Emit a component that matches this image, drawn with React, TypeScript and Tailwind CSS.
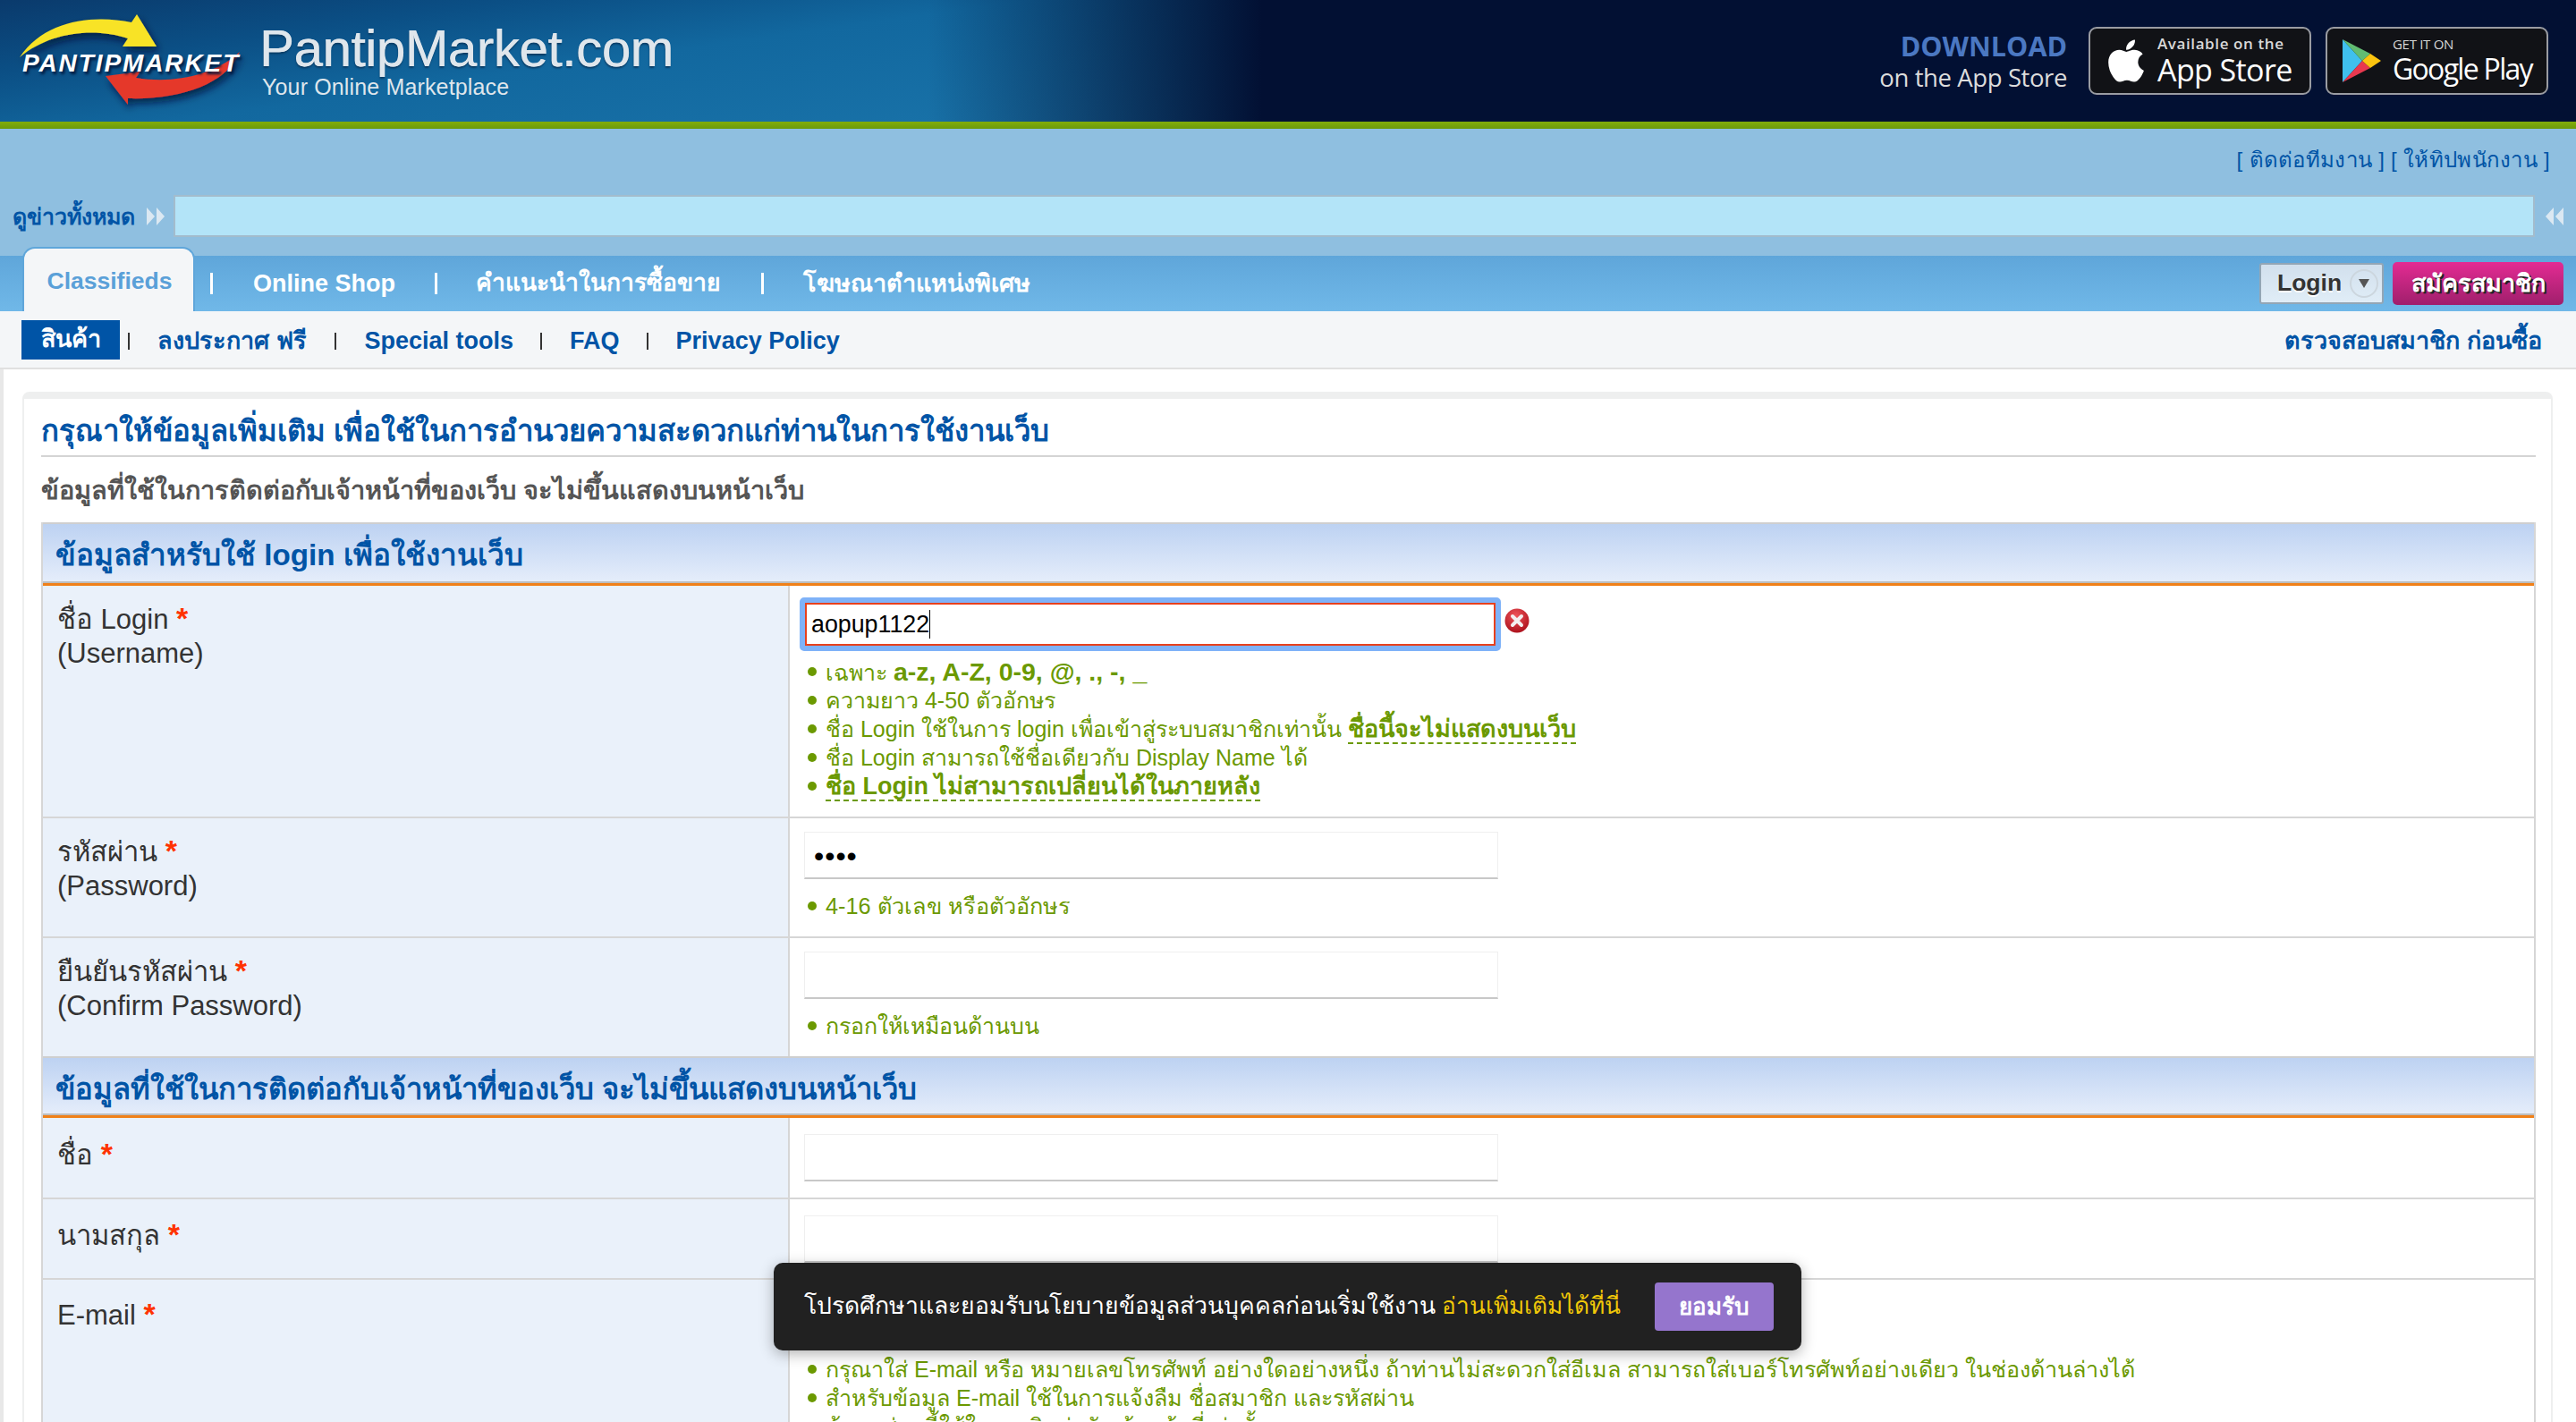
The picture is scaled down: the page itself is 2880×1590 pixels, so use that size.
import React from "react";
import { FaApple } from "react-icons/fa";

function Sep({ className = "" }: { className?: string }) {
  return <span className={`w-[3px] h-[24px] bg-white shrink-0 ${className}`} />;
}

function SubSep({ className = "" }: { className?: string }) {
  return <span className={`w-[2px] h-[19px] bg-[#333] shrink-0 ${className}`} />;
}

function Star() {
  return <span className="text-[#ff3300] font-bold text-[34px] leading-none">*</span>;
}

function Hint({ children }: { children: React.ReactNode }) {
  return (
    <div className="flex items-center h-[32px] leading-[32px] whitespace-nowrap">
      <span className="w-[10px] h-[10px] rounded-full bg-[#6b9900] shrink-0 mr-[10px]" />
      <span>{children}</span>
    </div>
  );
}

function Dash({ children }: { children: React.ReactNode }) {
  return <b className="font-bold text-[27px] border-b-2 border-dashed border-[#6b9900] leading-[30px] inline-block">{children}</b>;
}

function Field({ value }: { value?: string }) {
  return (
    <div className="w-[776px] h-[53px] bg-white border border-[#efefef] border-b-2 border-b-[#c8c8c8] flex items-center pl-[10px] text-black">
      {value && <span className="text-[32px] tracking-[1px] leading-none pt-[2px]">{value}</span>}
    </div>
  );
}

function Row({ label, h, labelPad = "pt-[19px]", children }: { label: React.ReactNode; h: string; labelPad?: string; children: React.ReactNode }) {
  return (
    <div className={`flex ${h} border-b-2 border-[#d6d6d6]`}>
      <div className={`w-[835px] shrink-0 bg-[#eaf1fa] border-r-2 border-[#d6d6d6] pl-[16px] ${labelPad} text-[31px] leading-[38px] text-[#333]`}>{label}</div>
      <div className="flex-1 pl-[16px] bg-white">{children}</div>
    </div>
  );
}

function SectionHead({ children, h, textClass }: { children: React.ReactNode; h: string; textClass: string }) {
  return (
    <div className={`${h} bg-gradient-to-b from-[#bdd2f2] to-[#e8effb] border-t-2 border-[#cfcfcf] flex flex-col`}>
      <div className={`flex-1 flex items-center pl-[14px] font-bold text-[#0054a6] ${textClass}`}>{children}</div>
      <div className="h-[5px] bg-[#f08018] border-t-2 border-[#bdbdbd] shrink-0" />
    </div>
  );
}

function Logo() {
  return (
    <div className="relative w-[280px] h-[136px] shrink-0">
      <svg viewBox="0 0 280 136" className="absolute inset-0 w-full h-full">
        <defs>
          <filter id="s" x="-10%" y="-10%" width="125%" height="130%">
            <feDropShadow dx="3" dy="5" stdDeviation="4" floodColor="#001030" floodOpacity="0.75" />
          </filter>
        </defs>
        <g filter="url(#s)">
          <path d="M22 64 C50 22 105 16 147 25 L153 16 L175 52 L137 52 L143 43 C105 30 55 36 22 64Z" fill="#f8e326" />
          <path d="M118 85 L157 80 L152 87 C195 94 240 84 268 58 C255 92 205 112 143 110 L143 117Z" fill="#e5372c" />
        </g>
      </svg>
      <span className="absolute left-[25px] top-[56px] text-[28px] leading-[30px] font-black italic text-white tracking-[1.9px] font-['Liberation_Sans',sans-serif] [text-shadow:2px_3px_3px_#001a40]">PANTIPMARKET</span>
    </div>
  );
}

function ErrorIcon() {
  return (
    <svg viewBox="0 0 28 28" className="w-[28px] h-[28px] ml-[4px] mt-[12px] shrink-0">
      <defs>
        <radialGradient id="e" cx="45%" cy="30%" r="75%">
          <stop offset="0%" stopColor="#f0555a" />
          <stop offset="100%" stopColor="#a80d18" />
        </radialGradient>
      </defs>
      <circle cx="14" cy="14" r="13.5" fill="url(#e)" />
      <path d="M9 9 L19 19 M19 9 L9 19" stroke="#f4f0f0" strokeWidth="4" strokeLinecap="round" />
    </svg>
  );
}

function PlayIcon() {
  return (
    <svg viewBox="0 0 44 50" className="w-[44px] h-[50px] shrink-0">
      <path d="M1 1 L23 25 L1 49Z" fill="#3fc0ee" />
      <path d="M1 1 L32 17 L23 25Z" fill="#62bc72" />
      <path d="M1 49 L32 33 L23 25Z" fill="#e8384f" />
      <path d="M32 17 L44 25 L32 33 L23 25Z" fill="#fbc40f" />
    </svg>
  );
}

function Arrows({ flip = false }: { flip?: boolean }) {
  return (
    <svg viewBox="0 0 22 24" className="w-[22px] h-[24px]">
      <g fill="#dbe8f2" transform={flip ? "matrix(-1 0 0 1 22 0)" : undefined}>
        <path d="M1 2 L10 12 L1 22Z" />
        <path d="M12 2 L21 12 L12 22Z" />
      </g>
    </svg>
  );
}

export default function App() {
  return (
    <div className="w-[2880px] h-[1590px] relative overflow-hidden bg-white font-['Liberation_Sans','Noto_Sans',sans-serif]">
      {/* banner */}
      <header className="h-[136px] flex items-center bg-[linear-gradient(90deg,transparent_0%,transparent_36%,#021033_49%,#021033_100%),linear-gradient(172deg,#0a3a6c_0%,#0b4f85_15%,#12689f_30%,#1a74aa_60%,#1a6ea2_100%)]">
        <Logo />
        <div className="ml-[10px] text-[#dfe6ec] pt-[2px]">
          <div className="text-[58px] leading-[56px] font-normal [text-shadow:0.6px_0_0_#dfe6ec,0_2px_2px_#0a3b63] tracking-[-0.3px]">PantipMarket.com</div>
          <div className="text-[25px] leading-[30px] ml-[3px] tracking-[0.15px]">Your Online Marketplace</div>
        </div>
        <div className="ml-auto flex items-center font-['Open_Sans',sans-serif]">
          <div className="text-right mr-[24px] whitespace-nowrap">
            <div className="text-[30.5px] leading-[38px] font-bold text-[#4b78c2]">DOWNLOAD</div>
            <div className="text-[27.5px] leading-[34px] text-[#dcdcdc] tracking-[-0.4px]">on the App Store</div>
          </div>
          <div className="w-[249px] h-[76px] rounded-[9px] border-2 border-[#9a9ca2] bg-[#111216] flex items-center pl-[16px] text-white whitespace-nowrap">
            <FaApple className="w-[48px] h-[54px] mr-[11px] shrink-0" />
            <div>
              <div className="text-[17px] leading-[20px] font-semibold tracking-[0.6px] text-[#d8d8d8]">Available on the</div>
              <div className="text-[34px] leading-[38px] tracking-[-0.6px]">App Store</div>
            </div>
          </div>
          <div className="w-[249px] h-[76px] rounded-[9px] border-2 border-[#9a9ca2] bg-[#111216] flex items-center pl-[16px] ml-[16px] mr-[31px] text-white whitespace-nowrap">
            <PlayIcon />
            <div className="ml-[13px]">
              <div className="text-[15px] leading-[18px] tracking-[-0.3px] text-[#d8d8d8]">GET IT ON</div>
              <div className="text-[32px] leading-[38px] tracking-[-1.7px]">Google Play</div>
            </div>
          </div>
        </div>
      </header>
      <div className="h-[8px] bg-gradient-to-b from-[#82ad0a] to-[#6c9a0a]" />

      {/* top links and news */}
      <div className="h-[142px] bg-[#8fbfe0]">
        <div className="h-[74px] flex justify-end items-end pb-[22px] pr-[29px] text-[24px] leading-[34px] text-[#0054a6] tracking-[0.3px]">
          [ ติดต่อทีมงาน ] [ ให้ทิปพนักงาน ]
        </div>
        <div className="flex items-center h-[47px]">
          <span className="ml-[14px] w-[149px] font-bold text-[25px] text-[#0054a6] whitespace-nowrap pt-[2px]">ดูข่าวทั้งหมด</span>
          <span className="w-[31px] flex"><Arrows /></span>
          <div className="flex-1 h-[47px] bg-[#b3e4f8] border-2 border-[#a3bccd]" />
          <span className="w-[46px] pl-[11px] flex"><Arrows flip /></span>
        </div>
      </div>

      {/* main nav */}
      <nav className="h-[62px] relative flex items-center bg-gradient-to-b from-[#5fa6da] to-[#70b8e8] text-white font-bold text-[27px] whitespace-nowrap">
        <div className="absolute left-[25px] bottom-0 w-[193px] h-[72px] bg-[#f4f6f8] rounded-t-[14px] border-t-2 border-x-2 border-[#5fa6da] flex items-center justify-center text-[#5aa0d8] text-[26.5px] pt-[4px] pl-[2px]">Classifieds</div>
        <div className="ml-[235px] flex items-center">
          <Sep />
          <span className="ml-[45px]">Online Shop</span>
          <Sep className="ml-[44px]" />
          <span className="ml-[43px] text-[26.5px]">คำแนะนำในการซื้อขาย</span>
          <Sep className="ml-[45px]" />
          <span className="ml-[44px]">โฆษณาตำแหน่งพิเศษ</span>
        </div>
        <div className="ml-auto mr-[14px] flex items-center">
          <div className="w-[139px] h-[46px] bg-gradient-to-b from-[#d2e0ed] to-[#e0edf7] border-2 border-[#93a6b5] rounded-[3px] flex items-center pl-[18px] text-[#333] text-[26.5px] [text-shadow:0_2px_0_#fff]">
            Login
            <span className="ml-[9px] w-[32px] h-[32px] rounded-full border-2 border-[#ccd6de] flex items-center justify-center">
              <svg viewBox="0 0 12 12" className="w-[12px] h-[12px]"><path d="M0 1 H12 L6 11Z" fill="#555" /></svg>
            </span>
          </div>
          <div className="ml-[10px] w-[191px] h-[48px] bg-gradient-to-b from-[#e42b93] to-[#a01f6c] rounded-[5px] flex items-center justify-center text-[27px] text-white [text-shadow:2px_2px_0_#222]">สมัครสมาชิก</div>
        </div>
      </nav>

      {/* sub nav */}
      <div className="h-[65px] pt-[3px] bg-[#f4f6f8] border-b-2 border-[#e0e0e0] flex items-center text-[27px] font-bold text-[#0054a6] whitespace-nowrap">
        <span className="ml-[24px] -mt-[3px] w-[110px] h-[44px] bg-[#0054a6] text-white flex items-center justify-center">สินค้า</span>
        <SubSep className="ml-[9px]" />
        <span className="ml-[31px]">ลงประกาศ ฟรี</span>
        <SubSep className="ml-[31px]" />
        <span className="ml-[32px]">Special tools</span>
        <SubSep className="ml-[30px]" />
        <span className="ml-[31px]">FAQ</span>
        <SubSep className="ml-[30px]" />
        <span className="ml-[31px]">Privacy Policy</span>
        <span className="ml-auto mr-[38px]">ตรวจสอบสมาชิก ก่อนซื้อ</span>
      </div>

      {/* content */}
      <div className="pl-[21px] pr-[26px] pt-[25px] border-l-4 border-[#e8e8e8]">
        <div className="rounded-t-[8px] border-t-[8px] border-x-2 border-[#eeefef] pl-[19px] pr-[17px]">
          <h1 className="h-[65px] border-b-2 border-[#d4d4d4] flex items-end pb-[7px] text-[32.9px] leading-[40px] font-bold text-[#0054a6] whitespace-nowrap">กรุณาให้ข้อมูลเพิ่มเติม เพื่อใช้ในการอำนวยความสะดวกแก่ท่านในการใช้งานเว็บ</h1>
          <div className="h-[73px] flex items-center pt-[2px] text-[28.9px] font-bold text-[#555] whitespace-nowrap">ข้อมูลที่ใช้ในการติดต่อกับเจ้าหน้าที่ของเว็บ จะไม่ขึ้นแสดงบนหน้าเว็บ</div>

          <div className="border-x-2 border-[#d6d6d6]">
            <SectionHead h="h-[71px]" textClass="pt-[6px] text-[33.2px]">ข้อมูลสำหรับใช้ login เพื่อใช้งานเว็บ</SectionHead>
            <Row h="h-[260px]" label={<>ชื่อ Login <Star /><br />(Username)</>}>
              <div className="flex pt-[13px]">
                <div className="w-[784px] h-[60px] -ml-[5px] rounded-[5px] border-[6px] border-[#7fb2f8]">
                  <div className="h-full border-2 border-[#e8401c] bg-white flex items-center pl-[5px] text-[26.8px] text-black">
                    aopup1122<span className="w-[1px] h-[32px] bg-black" />
                  </div>
                </div>
                <ErrorIcon />
              </div>
              <div className="mt-[7px] pl-[4px] text-[25px] text-[#6b9900]">
                <Hint>เฉพาะ <b className="text-[28.5px]">a-z, A-Z, 0-9, @, ., -, _</b></Hint>
                <Hint>ความยาว 4-50 ตัวอักษร</Hint>
                <Hint>ชื่อ Login ใช้ในการ login เพื่อเข้าสู่ระบบสมาชิกเท่านั้น <Dash>ชื่อนี้จะไม่แสดงบนเว็บ</Dash></Hint>
                <Hint>ชื่อ Login สามารถใช้ชื่อเดียวกับ Display Name ได้</Hint>
                <Hint><Dash>ชื่อ Login ไม่สามารถเปลี่ยนได้ในภายหลัง</Dash></Hint>
              </div>
            </Row>
            <Row h="h-[134px]" label={<>รหัสผ่าน <Star /><br />(Password)</>}>
              <div className="pt-[15px]"><Field value="••••" /></div>
              <div className="mt-[14px] pl-[4px] text-[25.3px] text-[#6b9900]"><Hint>4-16 ตัวเลข หรือตัวอักษร</Hint></div>
            </Row>
            <div className="[&>div]:border-b-0">
              <Row h="h-[132px]" label={<>ยืนยันรหัสผ่าน <Star /><br />(Confirm Password)</>}>
                <div className="pt-[15px]"><Field /></div>
                <div className="mt-[14px] pl-[4px] text-[25px] text-[#6b9900]"><Hint>กรอกให้เหมือนด้านบน</Hint></div>
              </Row>
            </div>
            <SectionHead h="h-[69px]" textClass="pt-[8px] text-[32.8px]">ข้อมูลที่ใช้ในการติดต่อกับเจ้าหน้าที่ของเว็บ จะไม่ขึ้นแสดงบนหน้าเว็บ</SectionHead>
            <Row h="h-[91px]" labelPad="pt-[23px]" label={<>ชื่อ <Star /></>}>
              <div className="pt-[18px]"><Field /></div>
            </Row>
            <Row h="h-[90px]" labelPad="pt-[22px]" label={<>นามสกุล <Star /></>}>
              <div className="pt-[18px]"><Field /></div>
            </Row>
            <Row h="h-[400px]" labelPad="pt-[21px]" label={<>E-mail <Star /></>}>
              <div className="pt-[17px]"><Field /></div>
              <div className="mt-[14px] pl-[4px] text-[25.1px] text-[#6b9900]">
                <Hint>กรุณาใส่ E-mail หรือ หมายเลขโทรศัพท์ อย่างใดอย่างหนึ่ง ถ้าท่านไม่สะดวกใส่อีเมล สามารถใส่เบอร์โทรศัพท์อย่างเดียว ในช่องด้านล่างได้</Hint>
                <Hint>สำหรับข้อมูล E-mail ใช้ในการแจ้งลืม ชื่อสมาชิก และรหัสผ่าน</Hint>
                <Hint>ข้อมูลส่วนนี้ใช้ในการติดต่อกับเจ้าหน้าที่เท่านั้น</Hint>
              </div>
            </Row>
          </div>
        </div>
      </div>

      {/* consent popup */}
      <div className="absolute left-[865px] top-[1412px] w-[1149px] h-[98px] bg-[#212121] rounded-[10px] shadow-[0_4px_16px_rgba(0,0,0,0.3)] flex items-center pl-[34px] pr-[31px] text-[26.6px] text-white whitespace-nowrap">
        <span>โปรดศึกษาและยอมรับนโยบายข้อมูลส่วนบุคคลก่อนเริ่มใช้งาน <span className="text-[#f0c808] text-[26.2px]">อ่านเพิ่มเติมได้ที่นี่</span></span>
        <button className="ml-auto w-[133px] h-[54px] bg-[#9575cd] rounded-[4px] text-white font-bold text-[26px]">ยอมรับ</button>
      </div>
    </div>
  );
}
